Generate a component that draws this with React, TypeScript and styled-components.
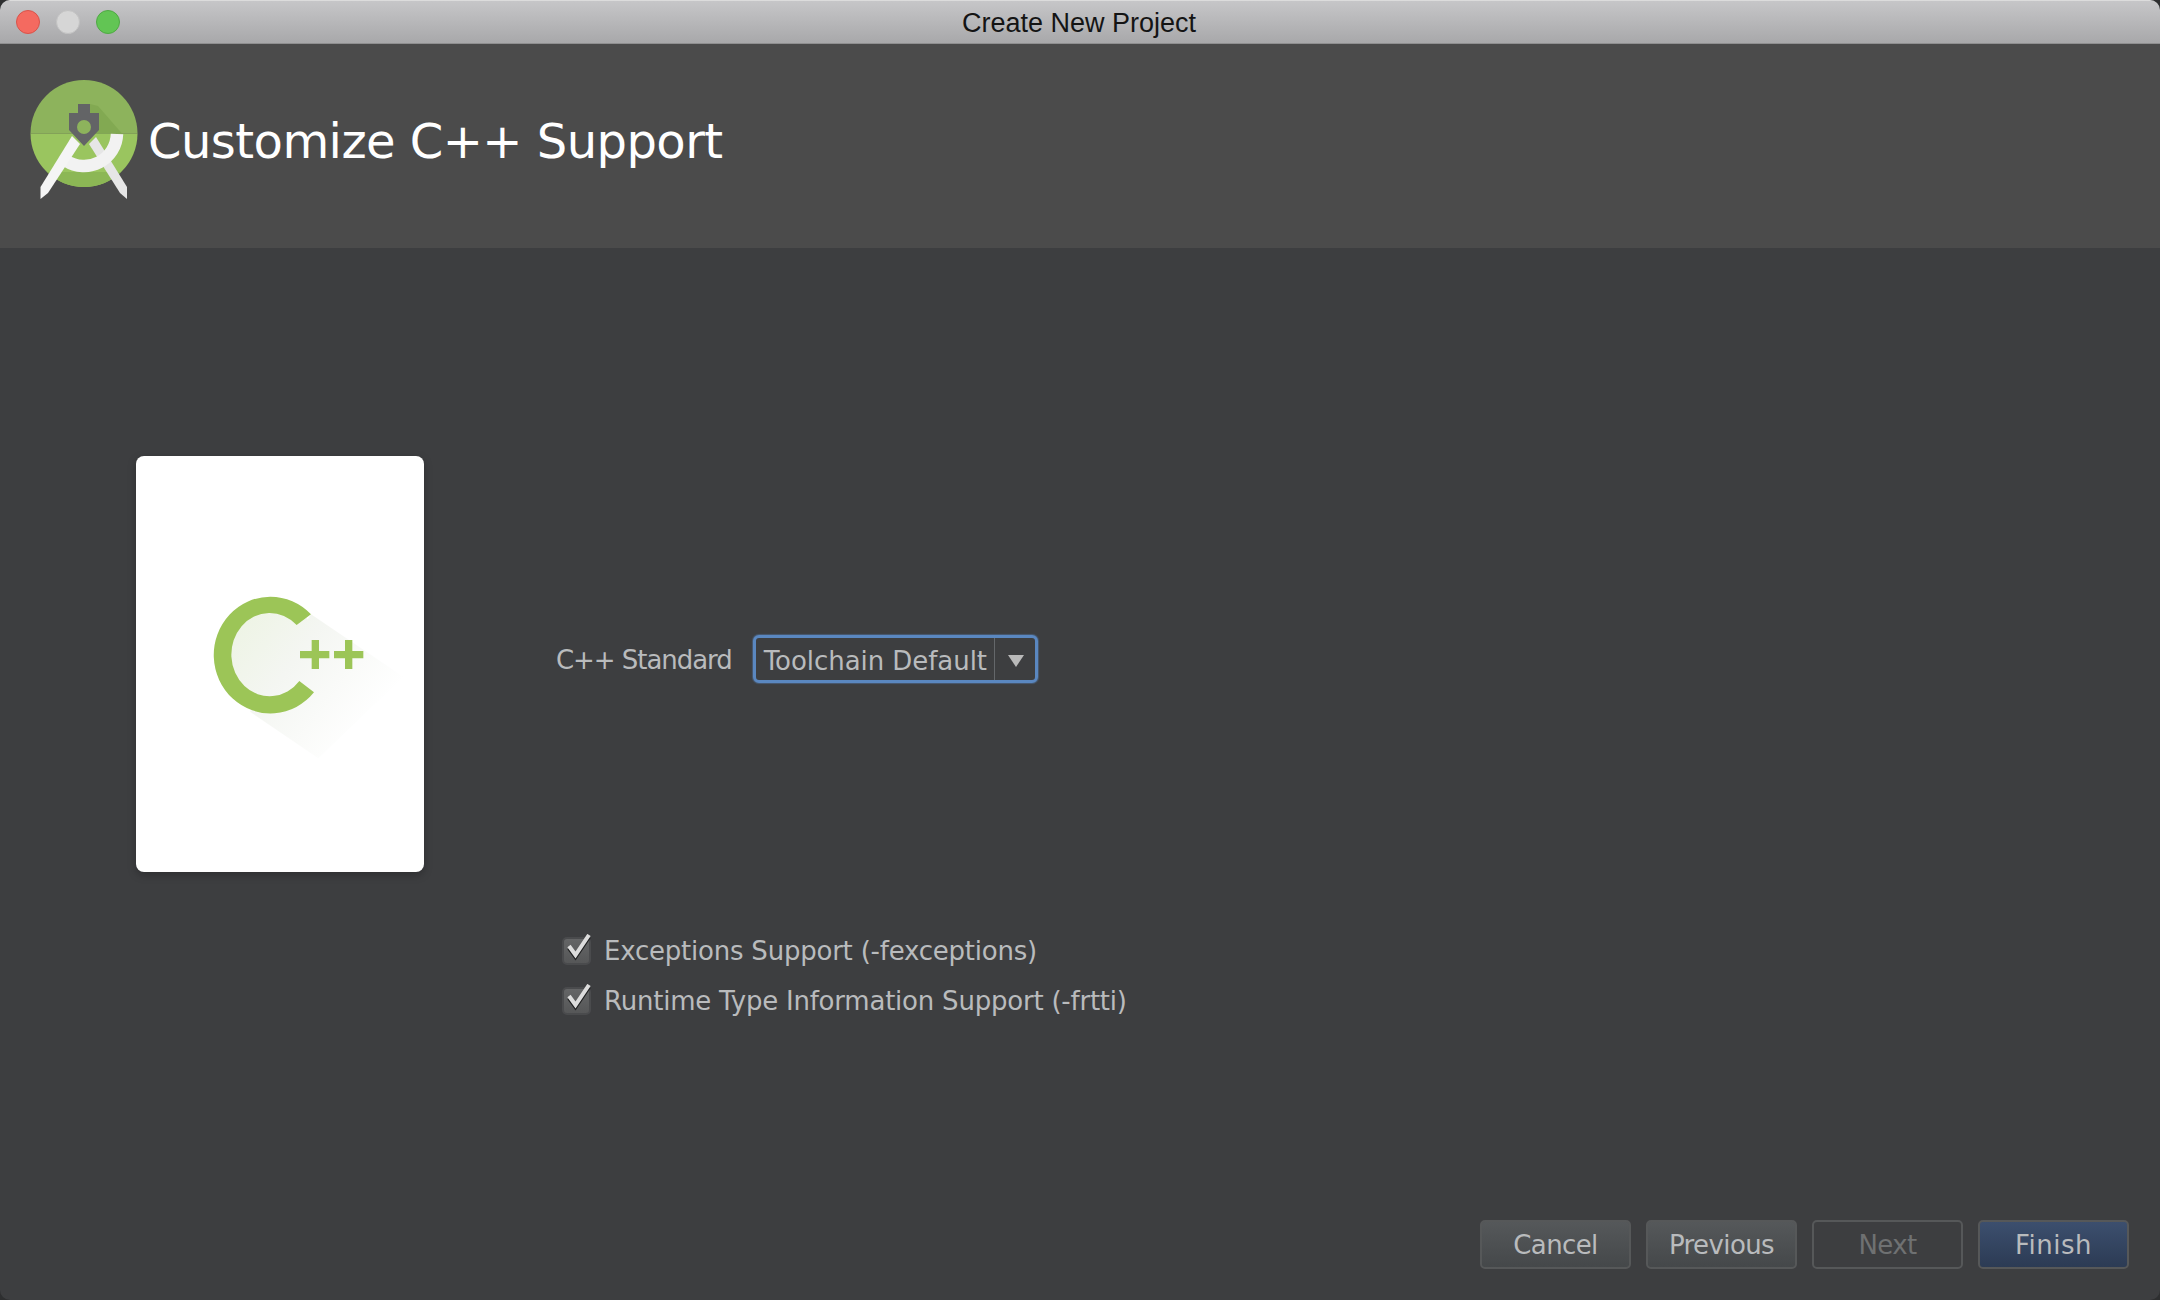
import styled, { createGlobalStyle } from "styled-components";

const GlobalStyle = createGlobalStyle`
  html, body {
    margin: 0;
    padding: 0;
    background: #2e2f30;
  }
  * {
    box-sizing: border-box;
  }
`;

const AndroidStudioLogo = () => (
  <LogoSvg viewBox="0 0 130 140">
    <defs>
      <clipPath id="disc">
        <circle cx="64" cy="63.5" r="53.5" />
      </clipPath>
    </defs>
    <g clipPath="url(#disc)">
      <rect x="0" y="0" width="130" height="63.5" fill="#8db35c" />
      <rect x="0" y="63.5" width="130" height="80" fill="#9ac55f" />
      <rect x="0" y="102" width="130" height="40" fill="#8cb755" />
      <polygon points="70,34 78,36 102,63.5 70,63.5" fill="#82a952" />
    </g>
    <polygon points="76,67 69,74 100,123 107,129 107,117" fill="#e6e6e6" />
    <path
      d="M97 64 A33 33 0 0 1 46 90.7"
      fill="none"
      stroke="#f2f2f2"
      strokeWidth="12.5"
    />
    <polygon points="52,66 60,74 28,123 20.5,129 20.5,117" fill="#f5f5f5" />
    <path
      d="M58 34 H70 V43 H79 V60 L64 76 L49 60 V43 H58 Z"
      fill="#636466"
    />
    <circle cx="64" cy="57" r="7" fill="#8db35c" />
  </LogoSvg>
);

const CppArtwork = () => (
  <CppSvg viewBox="0 0 660 570">
    <defs>
      <linearGradient
        id="fade"
        gradientUnits="userSpaceOnUse"
        x1="150"
        y1="130"
        x2="540"
        y2="430"
      >
        <stop offset="0" stopColor="#eef4e5" />
        <stop offset="0.4" stopColor="#f4f6f2" />
        <stop offset="1" stopColor="#ffffff" />
      </linearGradient>
    </defs>
    <polygon points="363,103 640,290 385,535 180,395" fill="url(#fade)" />
    <ellipse cx="240" cy="223" rx="150" ry="160" fill="url(#fade)" />
    <path
      d="M363 103 A170 175 0 1 0 372 337 L328 303 A115 125 0 1 1 320 135 Z"
      fill="#9cc557"
    />
    <path
      d="M365 180 H387 V213 H418 V235 H387 V267 H365 V235 H330 V213 H365 Z"
      fill="#9cc557"
    />
    <path
      d="M465 180 H487 V213 H520 V235 H487 V267 H465 V235 H432 V213 H465 Z"
      fill="#9cc557"
    />
  </CppSvg>
);

const CheckBox = () => (
  <Box>
    <svg width="32" height="32" viewBox="0 0 32 32">
      <path
        d="M7 14 L13.5 23 L27 3"
        fill="none"
        stroke="#1d1e1f"
        strokeWidth="4"
      />
      <path
        d="M7 12 L13.5 21 L27 1"
        fill="none"
        stroke="#dcdcdc"
        strokeWidth="4"
      />
    </svg>
  </Box>
);

export default function App() {
  return (
    <>
      <GlobalStyle />
      <Window>
        <TitleBar>
          <Lights>
            <Light color="#f46a60" edge="#d9534a" />
            <Light color="#d6d6d6" edge="#c2c2c2" />
            <Light color="#62c554" edge="#4fa944" />
          </Lights>
          <WindowTitle>Create New Project</WindowTitle>
        </TitleBar>
        <Header>
          <AndroidStudioLogo />
          <HeaderTitle>Customize C++ Support</HeaderTitle>
        </Header>
        <Main>
          <Card>
            <CppArtwork />
          </Card>
          <Form>
            <ComboRow>
              <ComboLabel>C++ Standard</ComboLabel>
              <Combo>
                <ComboValue>Toolchain Default</ComboValue>
                <ComboArrow />
              </Combo>
            </ComboRow>
            <Checks>
              <CheckRow>
                <CheckBox />
                <Label>Exceptions Support (-fexceptions)</Label>
              </CheckRow>
              <CheckRow>
                <CheckBox />
                <Label>Runtime Type Information Support (-frtti)</Label>
              </CheckRow>
            </Checks>
          </Form>
        </Main>
        <Footer>
          <Button>Cancel</Button>
          <Button>Previous</Button>
          <Button kind="disabled">Next</Button>
          <Button kind="primary">Finish</Button>
        </Footer>
      </Window>
    </>
  );
}

const Window = styled.div`
  width: 2160px;
  height: 1300px;
  display: flex;
  flex-direction: column;
  background: #3d3e40;
  border-radius: 10px;
  overflow: hidden;
  font-family: "DejaVu Sans", sans-serif;
`;

const TitleBar = styled.div`
  height: 44px;
  flex: none;
  display: flex;
  align-items: center;
  position: relative;
  background: linear-gradient(#c6c6c8, #a8a8aa);
  border-top: 1px solid #dcdcdc;
  border-bottom: 1px solid #8f8f90;
`;

const Lights = styled.div`
  display: flex;
  gap: 16px;
  padding-left: 16px;
`;

const Light = styled.div<{ color: string; edge: string }>`
  width: 24px;
  height: 24px;
  border-radius: 50%;
  background: ${(p) => p.color};
  border: 1px solid ${(p) => p.edge};
`;

const WindowTitle = styled.div`
  position: absolute;
  left: 0;
  right: 2px;
  top: 7px;
  text-align: center;
  font-family: "Liberation Sans", Arial, sans-serif;
  font-size: 27px;
  color: #141414;
`;

const Header = styled.div`
  height: 204px;
  flex: none;
  display: flex;
  align-items: flex-start;
  background: #4b4b4b;
  padding: 26px 0 0 20px;
`;

const LogoSvg = styled.svg`
  width: 130px;
  height: 140px;
  flex: none;
`;

const HeaderTitle = styled.div`
  margin: 39px 0 0 -2px;
  font-size: 48px;
  line-height: 64px;
  letter-spacing: -0.55px;
  color: #ffffff;
`;

const Main = styled.div`
  flex: 1;
  display: flex;
  align-items: flex-start;
  padding: 208px 0 0 136px;
`;

const Card = styled.div`
  width: 288px;
  height: 416px;
  flex: none;
  padding: 124px 0 0 54px;
  background: #ffffff;
  border-radius: 8px;
  box-shadow: 0 3px 8px rgba(0, 0, 0, 0.25);
`;

const CppSvg = styled.svg`
  display: block;
  width: 220px;
  height: 190px;
`;

const Form = styled.div`
  display: flex;
  flex-direction: column;
  margin-left: 132px;
`;

const ComboRow = styled.div`
  display: flex;
  align-items: center;
  gap: 21px;
  margin-top: 179px;
`;

const Label = styled.span`
  font-size: 26px;
  letter-spacing: -0.22px;
  color: #b9bbbd;
  white-space: nowrap;
`;

const ComboLabel = styled(Label)`
  padding-top: 2px;
  letter-spacing: -1.05px;
`;

const Combo = styled.div`
  width: 285px;
  height: 48px;
  display: flex;
  align-items: stretch;
  border: 3px solid #5a87c0;
  border-radius: 6px;
  background: #3d3e40;
  box-shadow: 0 0 1px 1px rgba(90, 135, 192, 0.4);
`;

const ComboValue = styled.div`
  flex: 1;
  display: flex;
  align-items: center;
  padding: 3px 0 0 8px;
  font-size: 26px;
  letter-spacing: -0.05px;
  color: #b9bbbd;
  white-space: nowrap;
  border-right: 1px solid #64676a;
`;

const ComboArrow = styled.div`
  width: 40px;
  flex: none;
  position: relative;
  &::after {
    content: "";
    position: absolute;
    left: 13px;
    top: 17px;
    border-left: 8px solid transparent;
    border-right: 8px solid transparent;
    border-top: 12px solid #b9b9b9;
  }
`;

const Checks = styled.div`
  display: flex;
  flex-direction: column;
  gap: 22px;
  margin-top: 254px;
  padding-left: 6px;
`;

const CheckRow = styled.div`
  display: flex;
  align-items: center;
  gap: 13px;
  height: 28px;
`;

const Box = styled.div`
  width: 29px;
  height: 28px;
  flex: none;
  position: relative;
  background: linear-gradient(#646566, #565758);
  border: 2px solid #4a4b4d;
  border-radius: 5px;
  svg {
    position: absolute;
    left: -2px;
    top: -5px;
  }
`;

const Footer = styled.div`
  flex: none;
  display: flex;
  justify-content: flex-end;
  gap: 15px;
  padding: 0 31px 31px 0;
`;

const buttonFill = {
  normal: "linear-gradient(#55585a, #45484a)",
  disabled: "#3d3e40",
  primary: "linear-gradient(#3c4f6e, #2c3b54)",
};

const Button = styled.div<{ kind?: "normal" | "disabled" | "primary" }>`
  width: 151px;
  height: 49px;
  display: flex;
  align-items: center;
  justify-content: center;
  font-size: 26px;
  letter-spacing: ${(p) => (p.kind === "primary" ? "0.5px" : "-0.6px")};
  border: 2px solid #565859;
  border-radius: 5px;
  background: ${(p) => buttonFill[p.kind ?? "normal"]};
  color: ${(p) => (p.kind === "disabled" ? "#6f7172" : "#b9bbbd")};
`;
